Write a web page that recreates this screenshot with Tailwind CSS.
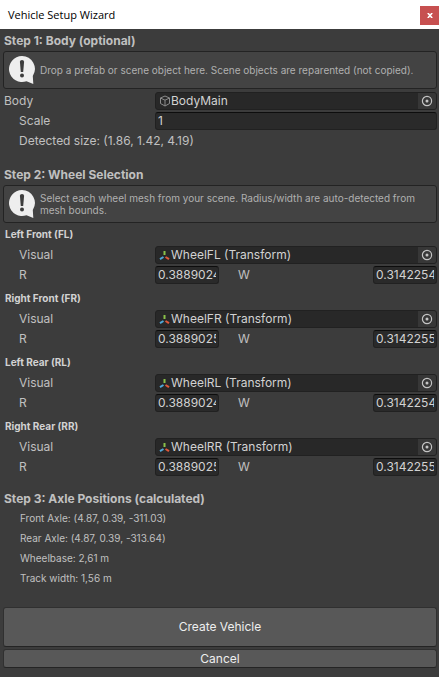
<!DOCTYPE html>
<html lang="en">

<head>
  <meta charset="UTF-8">
  <meta name="viewport" content="width=device-width, initial-scale=1.0">
  <title>Vehicle Setup Wizard</title>
  <script src="https://cdn.jsdelivr.net/npm/@tailwindcss/browser@4"></script>
</head>

<body class="min-h-screen bg-[#3c3c3c] font-['Inter',sans-serif] text-[12px] leading-[18px] text-[#c0c0c0]">
  <!-- Shared icons -->
  <svg class="hidden">
    <symbol id="icon-info" viewBox="0 0 26 28">
      <path d="M13 0a13 13 0 1 0 4.500 25.200L24.300 28l-.5-8A13 13 0 0 0 13 0z" fill="#eeeeee" />
      <path d="M10.900 5.800a2.100 1.800 0 0 1 4.200 0l-.9 10.200h-2.400z" fill="#3c3c3c" />
      <circle cx="13" cy="19.500" r="2" fill="#3c3c3c" />
    </symbol>
    <symbol id="icon-cube" viewBox="0 0 12 12">
      <path d="M6 1l4.500 2v5.500L6 11 1.500 8.500V3zM1.500 3L6 5.200 10.500 3M6 5.200V11" fill="none" stroke="#8c8c8c" stroke-linejoin="round" />
    </symbol>
    <symbol id="icon-transform" viewBox="0 0 12 12">
      <path d="M5.500 2v4" stroke="#8ac249" stroke-width="2" />
      <path d="M4.500 8L1 10.200" stroke="#4fa8d8" stroke-width="2" />
      <path d="M6.500 8l3.500 2.200" stroke="#e0583a" stroke-width="2" />
    </symbol>
    <symbol id="icon-picker" viewBox="0 0 12 12">
      <circle cx="6" cy="6" r="4.600" fill="none" stroke="#c4c4c4" stroke-width="1.200" />
      <circle cx="6" cy="6" r="1.500" fill="#c4c4c4" />
    </symbol>
  </svg>

  <!-- Title bar -->
  <header class="flex h-[29px] items-center justify-between bg-white pl-2 text-black">
    <h1 class="font-['Open_Sans',sans-serif] text-[11px]">Vehicle Setup Wizard</h1>
    <button type="button" aria-label="Close" class="mt-[2px] flex h-[19px] w-[19px] items-center justify-center bg-[#c75050]">
      <svg class="h-[5px] w-[6px]" viewBox="0 0 6 5"><path d="M.8 0l4.400 5M5.200 0L.8 5" stroke="#fff" stroke-width="1.600" /></svg>
    </button>
  </header>

  <main class="pt-[3px] pr-[2px] pb-2 pl-[3px]">
    <!-- Step 1 -->
    <section class="mb-4">
      <h2 class="mb-px pl-px font-bold">Step 1: Body (optional)</h2>
      <div class="mb-[3px] flex h-[38px] items-center rounded-[3px] border border-[#232323] bg-[#434343] pr-2 pl-[5px] text-[10px] leading-3 text-[#b0b0b0]">
        <svg class="mr-[5px] h-7 w-[26px] shrink-0"><use href="#icon-info" /></svg>
        <p>Drop a prefab or scene object here. Scene objects are reparented (not copied).</p>
      </div>
      <div class="mb-[2px] flex">
        <span class="w-[152px] shrink-0 pl-px">Body</span>
        <div class="flex h-[18px] flex-1 items-center overflow-hidden rounded-[3px] border border-[#212121] bg-[#282828] pl-[3px] text-[#d2d2d2]">
          <svg class="h-3 w-3 shrink-0"><use href="#icon-cube" /></svg>
          <span class="flex-1">BodyMain</span>
          <button type="button" aria-label="Select body" class="flex h-4 w-[18px] items-center justify-center bg-[#373737]"><svg class="h-3 w-3"><use href="#icon-picker" /></svg></button>
        </div>
      </div>
      <div class="mb-[2px] flex">
        <label for="scale" class="w-[152px] shrink-0 pl-4">Scale</label>
        <input id="scale" type="text" value="1" class="h-[18px] min-w-0 flex-1 rounded-[3px] border border-[#212121] border-t-[#0d0d0d] bg-[#2a2a2a] px-[2px] text-[#d2d2d2]">
      </div>
      <p class="pl-4">Detected size: (1.86, 1.42, 4.19)</p>
    </section>

    <!-- Step 2 -->
    <section>
      <h2 class="mb-px pl-px font-bold">Step 2: Wheel Selection</h2>
      <div class="mb-[2px] flex h-[38px] items-center rounded-[3px] border border-[#232323] bg-[#434343] pr-2 pl-[5px] text-[10px] leading-3 text-[#b0b0b0]">
        <svg class="mr-[5px] h-7 w-[26px] shrink-0"><use href="#icon-info" /></svg>
        <p>Select each wheel mesh from your scene. Radius/width are auto-detected from mesh bounds.</p>
      </div>

      <div class="mb-[5px]">
        <h3 class="mb-[3px] pl-[2px] text-[10px] font-bold text-[#d2d2d2]">Left Front (FL)</h3>
        <div class="mb-[2px] flex">
          <span class="w-[152px] shrink-0 pl-4">Visual</span>
          <div class="flex h-[18px] flex-1 items-center overflow-hidden rounded-[3px] border border-[#212121] bg-[#282828] pl-[3px] text-[#d2d2d2]">
            <svg class="h-3 w-3 shrink-0"><use href="#icon-transform" /></svg>
            <span class="flex-1">WheelFL (Transform)</span>
            <button type="button" aria-label="Select left front wheel" class="flex h-4 w-[18px] items-center justify-center bg-[#373737]"><svg class="h-3 w-3"><use href="#icon-picker" /></svg></button>
          </div>
        </div>
        <div class="flex">
          <label for="fl-r" class="w-[152px] shrink-0 pl-4">R</label>
          <input id="fl-r" type="text" value="0.3889024" class="h-[18px] w-16 rounded-[3px] border border-[#212121] border-t-[#0d0d0d] bg-[#2a2a2a] px-[2px] text-[#d2d2d2]">
          <label for="fl-w" class="flex-1 pl-[19px]">W</label>
          <input id="fl-w" type="text" value="0.3142254" class="h-[18px] w-16 rounded-[3px] border border-[#212121] border-t-[#0d0d0d] bg-[#2a2a2a] px-[2px] text-[#d2d2d2]">
        </div>
      </div>

      <div class="mb-[5px]">
        <h3 class="mb-[3px] pl-[2px] text-[10px] font-bold text-[#d2d2d2]">Right Front (FR)</h3>
        <div class="mb-[2px] flex">
          <span class="w-[152px] shrink-0 pl-4">Visual</span>
          <div class="flex h-[18px] flex-1 items-center overflow-hidden rounded-[3px] border border-[#212121] bg-[#282828] pl-[3px] text-[#d2d2d2]">
            <svg class="h-3 w-3 shrink-0"><use href="#icon-transform" /></svg>
            <span class="flex-1">WheelFR (Transform)</span>
            <button type="button" aria-label="Select right front wheel" class="flex h-4 w-[18px] items-center justify-center bg-[#373737]"><svg class="h-3 w-3"><use href="#icon-picker" /></svg></button>
          </div>
        </div>
        <div class="flex">
          <label for="fr-r" class="w-[152px] shrink-0 pl-4">R</label>
          <input id="fr-r" type="text" value="0.3889025" class="h-[18px] w-16 rounded-[3px] border border-[#212121] border-t-[#0d0d0d] bg-[#2a2a2a] px-[2px] text-[#d2d2d2]">
          <label for="fr-w" class="flex-1 pl-[19px]">W</label>
          <input id="fr-w" type="text" value="0.3142255" class="h-[18px] w-16 rounded-[3px] border border-[#212121] border-t-[#0d0d0d] bg-[#2a2a2a] px-[2px] text-[#d2d2d2]">
        </div>
      </div>

      <div class="mb-[5px]">
        <h3 class="mb-[3px] pl-[2px] text-[10px] font-bold text-[#d2d2d2]">Left Rear (RL)</h3>
        <div class="mb-[2px] flex">
          <span class="w-[152px] shrink-0 pl-4">Visual</span>
          <div class="flex h-[18px] flex-1 items-center overflow-hidden rounded-[3px] border border-[#212121] bg-[#282828] pl-[3px] text-[#d2d2d2]">
            <svg class="h-3 w-3 shrink-0"><use href="#icon-transform" /></svg>
            <span class="flex-1">WheelRL (Transform)</span>
            <button type="button" aria-label="Select left rear wheel" class="flex h-4 w-[18px] items-center justify-center bg-[#373737]"><svg class="h-3 w-3"><use href="#icon-picker" /></svg></button>
          </div>
        </div>
        <div class="flex">
          <label for="rl-r" class="w-[152px] shrink-0 pl-4">R</label>
          <input id="rl-r" type="text" value="0.3889024" class="h-[18px] w-16 rounded-[3px] border border-[#212121] border-t-[#0d0d0d] bg-[#2a2a2a] px-[2px] text-[#d2d2d2]">
          <label for="rl-w" class="flex-1 pl-[19px]">W</label>
          <input id="rl-w" type="text" value="0.3142254" class="h-[18px] w-16 rounded-[3px] border border-[#212121] border-t-[#0d0d0d] bg-[#2a2a2a] px-[2px] text-[#d2d2d2]">
        </div>
      </div>

      <div class="mb-[14px]">
        <h3 class="mb-[3px] pl-[2px] text-[10px] font-bold text-[#d2d2d2]">Right Rear (RR)</h3>
        <div class="mb-[2px] flex">
          <span class="w-[152px] shrink-0 pl-4">Visual</span>
          <div class="flex h-[18px] flex-1 items-center overflow-hidden rounded-[3px] border border-[#212121] bg-[#282828] pl-[3px] text-[#d2d2d2]">
            <svg class="h-3 w-3 shrink-0"><use href="#icon-transform" /></svg>
            <span class="flex-1">WheelRR (Transform)</span>
            <button type="button" aria-label="Select right rear wheel" class="flex h-4 w-[18px] items-center justify-center bg-[#373737]"><svg class="h-3 w-3"><use href="#icon-picker" /></svg></button>
          </div>
        </div>
        <div class="flex">
          <label for="rr-r" class="w-[152px] shrink-0 pl-4">R</label>
          <input id="rr-r" type="text" value="0.3889025" class="h-[18px] w-16 rounded-[3px] border border-[#212121] border-t-[#0d0d0d] bg-[#2a2a2a] px-[2px] text-[#d2d2d2]">
          <label for="rr-w" class="flex-1 pl-[19px]">W</label>
          <input id="rr-w" type="text" value="0.3142255" class="h-[18px] w-16 rounded-[3px] border border-[#212121] border-t-[#0d0d0d] bg-[#2a2a2a] px-[2px] text-[#d2d2d2]">
        </div>
      </div>
    </section>

    <!-- Step 3 -->
    <section class="mb-[19px]">
      <h2 class="pl-px font-bold">Step 3: Axle Positions (calculated)</h2>
      <div class="pl-[17px] text-[10px] leading-5">
        <p>Front Axle: (4.87, 0.39, -311.03)</p>
        <p>Rear Axle: (4.87, 0.39, -313.64)</p>
        <p>Wheelbase: 2,61 m</p>
        <p>Track width: 1,56 m</p>
      </div>
    </section>

    <!-- Actions -->
    <div class="flex flex-col gap-[2px] text-[#eeeeee]">
      <button type="button" class="h-10 rounded-[3px] border border-[#303030] border-b-[#242424] bg-[#585858]">Create Vehicle</button>
      <button type="button" class="h-[19px] rounded-[3px] border border-[#303030] border-b-[#242424] bg-[#585858] leading-4">Cancel</button>
    </div>
  </main>
</body>

</html>
